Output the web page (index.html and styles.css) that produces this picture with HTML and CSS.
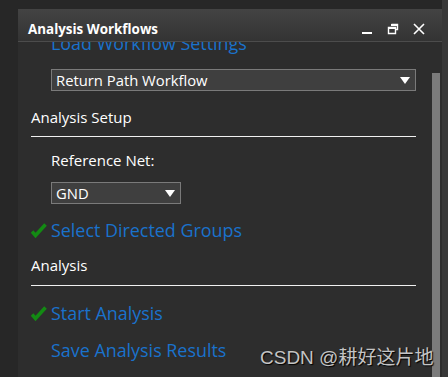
FILE: index.html
```html
<!DOCTYPE html>
<html>
<head>
  <title>Analysis Workflows</title>
  <link rel="stylesheet" href="styles.css">
</head>
<body>
  <div class="panel">
    <div class="titlebar">
      <span class="title">Analysis Workflows</span>
      <div class="window-buttons">
        <svg class="btn-min" width="12" height="12" viewBox="0 0 12 12"><rect x="1" y="9" width="10" height="2" fill="#fff"/></svg>
        <svg class="btn-restore" width="12" height="12" viewBox="0 0 12 12"><path d="M4.5 1.5h6v5h-2M1.5 4.5h7v6h-7z" fill="none" stroke="#fff" stroke-width="1.4"/><rect x="4" y="1" width="7" height="2" fill="#fff"/><rect x="1" y="4" width="8" height="2" fill="#fff"/></svg>
        <svg class="btn-close" width="12" height="12" viewBox="0 0 12 12"><path d="M1 1L11 11M11 1L1 11" stroke="#fff" stroke-width="1.6"/></svg>
      </div>
    </div>

    <div class="body">
      <div class="content">
        <a class="link first">Load Workflow Settings</a>

        <div class="select wide">
          <span>Return Path Workflow</span>
          <span class="arrow"></span>
        </div>

        <div class="section">Analysis Setup</div>
        <div class="rule"></div>

        <div class="label">Reference Net:</div>
        <div class="select narrow">
          <span>GND</span>
          <span class="arrow"></span>
        </div>

        <div class="step">
          <svg class="check" width="16" height="15" viewBox="0 0 16 15"><path d="M1 8.5L4.5 12.5L14.5 1.5" fill="none" stroke="#138a13" stroke-width="3.6" stroke-linejoin="miter"/></svg>
          <a class="link">Select Directed Groups</a>
        </div>

        <div class="section after-step">Analysis</div>
        <div class="rule low"></div>

        <div class="step spaced">
          <svg class="check" width="16" height="15" viewBox="0 0 16 15"><path d="M1 8.5L4.5 12.5L14.5 1.5" fill="none" stroke="#138a13" stroke-width="3.6" stroke-linejoin="miter"/></svg>
          <a class="link">Start Analysis</a>
        </div>

        <div class="step">
          <span class="check-space"></span>
          <a class="link">Save Analysis Results</a>
        </div>
      </div>
      <div class="scrollbar">
        <div class="thumb"></div>
      </div>
    </div>
  </div>
  <div class="edge"></div>

  <div class="watermark">CSDN @耕好这片地</div>
</body>
</html>
```

FILE: styles.css
```css
html, body {
  height: 100%;
}

body {
  margin: 0;
  display: flex;
  background-color: #272727;
  font-family: "Open Sans", "Noto Sans", sans-serif;
  overflow: hidden;
  position: relative;
}

.panel {
  flex: 1;
  margin: 9px 0 0 18px;
  display: flex;
  flex-direction: column;
  background-color: #2d2d2d;
}

.edge {
  width: 6px;
  background-color: #383838;
}

.titlebar {
  box-sizing: border-box;
  height: 33px;
  display: flex;
  align-items: center;
  justify-content: space-between;
  padding: 7px 17px 0 10px;
  background: linear-gradient(#434343, #333333);
  border-bottom: 1px solid #4c4c4c;
}

.title {
  color: #fff;
  font-weight: bold;
  font-size: 13.4px;
}

.window-buttons {
  display: flex;
  gap: 14px;
  align-items: center;
}

.body {
  flex: 1;
  display: flex;
  overflow: hidden;
}

.content {
  flex: 1;
  padding: 0 16px 0 13px;
}

.scrollbar {
  width: 8px;
  margin-right: 2px;
  padding-top: 31px;
}

.thumb {
  height: 100%;
  background-color: #7b7b7b;
}

.link {
  color: #1a72cc;
  font-size: 17.9px;
}

.first {
  display: block;
  margin: -11px 0 0 20px;
}

.select {
  display: flex;
  justify-content: space-between;
  align-items: center;
  box-sizing: border-box;
  height: 22px;
  border: 1px solid #7a7a7a;
  background-color: #3f3f3f;
  color: #fff;
  font-size: 14.8px;
  padding: 0 5px 0 4px;
}

.select.wide {
  margin: 14px 0 0 20px;
}

.select.narrow {
  width: 130px;
  margin: 11px 0 0 20px;
}

.arrow {
  width: 0;
  height: 0;
  border-left: 5.5px solid transparent;
  border-right: 5.5px solid transparent;
  border-top: 7px solid #fff;
}

.section {
  color: #fff;
  font-size: 15px;
  margin-top: 15px;
  line-height: 22px;
}

.section.after-step {
  margin-top: 13px;
}

.rule {
  height: 1px;
  background-color: #f0f0f0;
  margin-top: 8px;
}

.rule.low {
  margin-top: 9px;
}

.label {
  color: #fff;
  font-size: 15px;
  margin: 12px 0 0 20px;
  line-height: 22px;
}

.step {
  display: flex;
  align-items: center;
  gap: 4px;
  margin-top: 15px;
  line-height: 22px;
}

.step.spaced {
  margin-top: 16px;
}

.check,
.check-space {
  width: 16px;
  height: 15px;
  flex: none;
}

.watermark {
  position: absolute;
  left: 260px;
  top: 342px;
  color: #c4c4c4;
  font-family: "Liberation Sans", "Noto Sans CJK SC", sans-serif;
  font-size: 19px;
  text-shadow: 1px 1px 1px #000;
}
```
